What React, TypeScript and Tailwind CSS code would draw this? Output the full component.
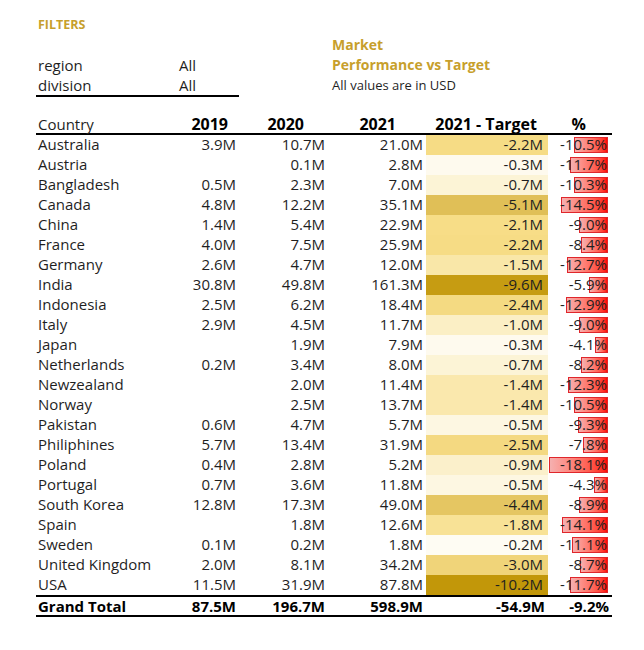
import React from "react";

type Row = {
  country: string;
  y2019: string;
  y2020: string;
  y2021: string;
  target: number;
  pct: number;
};

const rows: Row[] = [
  { country: "Australia", y2019: "3.9M", y2020: "10.7M", y2021: "21.0M", target: -2.2, pct: -10.5 },
  { country: "Austria", y2019: "", y2020: "0.1M", y2021: "2.8M", target: -0.3, pct: -11.7 },
  { country: "Bangladesh", y2019: "0.5M", y2020: "2.3M", y2021: "7.0M", target: -0.7, pct: -10.3 },
  { country: "Canada", y2019: "4.8M", y2020: "12.2M", y2021: "35.1M", target: -5.1, pct: -14.5 },
  { country: "China", y2019: "1.4M", y2020: "5.4M", y2021: "22.9M", target: -2.1, pct: -9.0 },
  { country: "France", y2019: "4.0M", y2020: "7.5M", y2021: "25.9M", target: -2.2, pct: -8.4 },
  { country: "Germany", y2019: "2.6M", y2020: "4.7M", y2021: "12.0M", target: -1.5, pct: -12.7 },
  { country: "India", y2019: "30.8M", y2020: "49.8M", y2021: "161.3M", target: -9.6, pct: -5.9 },
  { country: "Indonesia", y2019: "2.5M", y2020: "6.2M", y2021: "18.4M", target: -2.4, pct: -12.9 },
  { country: "Italy", y2019: "2.9M", y2020: "4.5M", y2021: "11.7M", target: -1.0, pct: -9.0 },
  { country: "Japan", y2019: "", y2020: "1.9M", y2021: "7.9M", target: -0.3, pct: -4.1 },
  { country: "Netherlands", y2019: "0.2M", y2020: "3.4M", y2021: "8.0M", target: -0.7, pct: -8.2 },
  { country: "Newzealand", y2019: "", y2020: "2.0M", y2021: "11.4M", target: -1.4, pct: -12.3 },
  { country: "Norway", y2019: "", y2020: "2.5M", y2021: "13.7M", target: -1.4, pct: -10.5 },
  { country: "Pakistan", y2019: "0.6M", y2020: "4.7M", y2021: "5.7M", target: -0.5, pct: -9.3 },
  { country: "Philiphines", y2019: "5.7M", y2020: "13.4M", y2021: "31.9M", target: -2.5, pct: -7.8 },
  { country: "Poland", y2019: "0.4M", y2020: "2.8M", y2021: "5.2M", target: -0.9, pct: -18.1 },
  { country: "Portugal", y2019: "0.7M", y2020: "3.6M", y2021: "11.8M", target: -0.5, pct: -4.3 },
  { country: "South Korea", y2019: "12.8M", y2020: "17.3M", y2021: "49.0M", target: -4.4, pct: -8.9 },
  { country: "Spain", y2019: "", y2020: "1.8M", y2021: "12.6M", target: -1.8, pct: -14.1 },
  { country: "Sweden", y2019: "0.1M", y2020: "0.2M", y2021: "1.8M", target: -0.2, pct: -11.1 },
  { country: "United Kingdom", y2019: "2.0M", y2020: "8.1M", y2021: "34.2M", target: -3.0, pct: -8.7 },
  { country: "USA", y2019: "11.5M", y2020: "31.9M", y2021: "87.8M", target: -10.2, pct: -11.7 },
];

// colour scale for the target column: white -> yellow -> dark gold
const stops: [number, number[]][] = [
  [0, [255, 255, 255]],
  [0.2, [247, 222, 136]],
  [0.5, [224, 191, 87]],
  [1, [194, 151, 9]],
];

function targetColor(v: number) {
  const t = Math.min(1, Math.abs(v) / 10.2);
  for (let i = 1; i < stops.length; i++) {
    const [p1, c1] = stops[i];
    const [p0, c0] = stops[i - 1];
    if (t <= p1) {
      const k = (t - p0) / (p1 - p0);
      const c = c0.map((x, j) => Math.round(x + (c1[j] - x) * k));
      return `rgb(${c[0]}, ${c[1]}, ${c[2]})`;
    }
  }
  return "rgb(194, 151, 9)";
}

const maxPct = 18.1;
const cols = "grid grid-cols-[124px_80px_89px_97px_122px_64px]";

function fmtM(v: number) {
  return `${v.toFixed(1)}M`;
}

export default function App() {
  return (
    <div className="w-[644px] h-[650px] bg-white text-[#1f1f1f] font-['Open_Sans',sans-serif]">
      <div className="flex pl-[36px] pt-[16px]">
        {/* Filters */}
        <div className="w-[203px]">
          <div className="text-[12.5px] leading-[18px] font-bold text-[#c79f2c] pl-[2px]">
            FILTERS
          </div>
          <div className="mt-[21px] border-b-2 border-black text-[15px] leading-[20px]">
            <div className="flex pl-[2px]">
              <span className="w-[141px]">region</span>
              <span>All</span>
            </div>
            <div className="flex pl-[2px]">
              <span className="w-[141px]">division</span>
              <span>All</span>
            </div>
          </div>
        </div>

        {/* Title */}
        <div className="ml-[93px] mt-[19px]">
          <div className="text-[14px] leading-[20px] font-bold text-[#c79f2c]">
            Market
          </div>
          <div className="text-[14px] leading-[20px] font-bold text-[#c79f2c]">
            Performance vs Target
          </div>
          <div className="text-[13px] leading-[20px]">All values are in USD</div>
        </div>
      </div>

      {/* Table */}
      <div className="ml-[36px] mt-[18px] w-[576px]">
        <div className={`${cols} h-[20px] border-b-2 border-black items-center text-[15px] leading-[18px]`}>
          <div className="pl-[2px]">Country</div>
          <div className="text-right pr-[12px] font-bold text-[16px] text-black">2019</div>
          <div className="text-right pr-[25px] font-bold text-[16px] text-black">2020</div>
          <div className="text-right pr-[30px] font-bold text-[16px] text-black">2021</div>
          <div className="text-right pr-[11px] font-bold text-[16px] text-black">2021 - Target</div>
          <div className="text-right pr-[26px] font-bold text-[16px] text-black">%</div>
        </div>

        {rows.map((r) => (
          <div key={r.country} className={`${cols} h-[20px] text-[15px] leading-[19px]`}>
            <div className="pl-[2px] whitespace-nowrap">{r.country}</div>
            <div className="text-right pr-[4px]">{r.y2019}</div>
            <div className="text-right pr-[4px]">{r.y2020}</div>
            <div className="text-right pr-[3px]">{r.y2021}</div>
            <div className="text-right pr-[5px]" style={{ backgroundColor: targetColor(r.target) }}>
              {fmtM(r.target)}
            </div>
            <div className="relative text-right pr-[5px]">
              <div
                className="absolute right-[4px] top-[2px] bottom-[2px] border border-[#e0262b] bg-gradient-to-r from-[#f5b0b0] to-[#ff0000]"
                style={{ width: `${(Math.abs(r.pct) / maxPct) * 59}px` }}
              />
              <span className="relative">{r.pct.toFixed(1)}%</span>
            </div>
          </div>
        ))}

        <div className={`${cols} h-[22px] border-y-2 border-black items-center text-[15px] leading-[18px] font-bold text-black`}>
          <div className="pl-[2px]">Grand Total</div>
          <div className="text-right pr-[4px]">87.5M</div>
          <div className="text-right pr-[4px]">196.7M</div>
          <div className="text-right pr-[3px]">598.9M</div>
          <div className="text-right pr-[3px]">-54.9M</div>
          <div className="text-right pr-[3px]">-9.2%</div>
        </div>
      </div>
    </div>
  );
}
